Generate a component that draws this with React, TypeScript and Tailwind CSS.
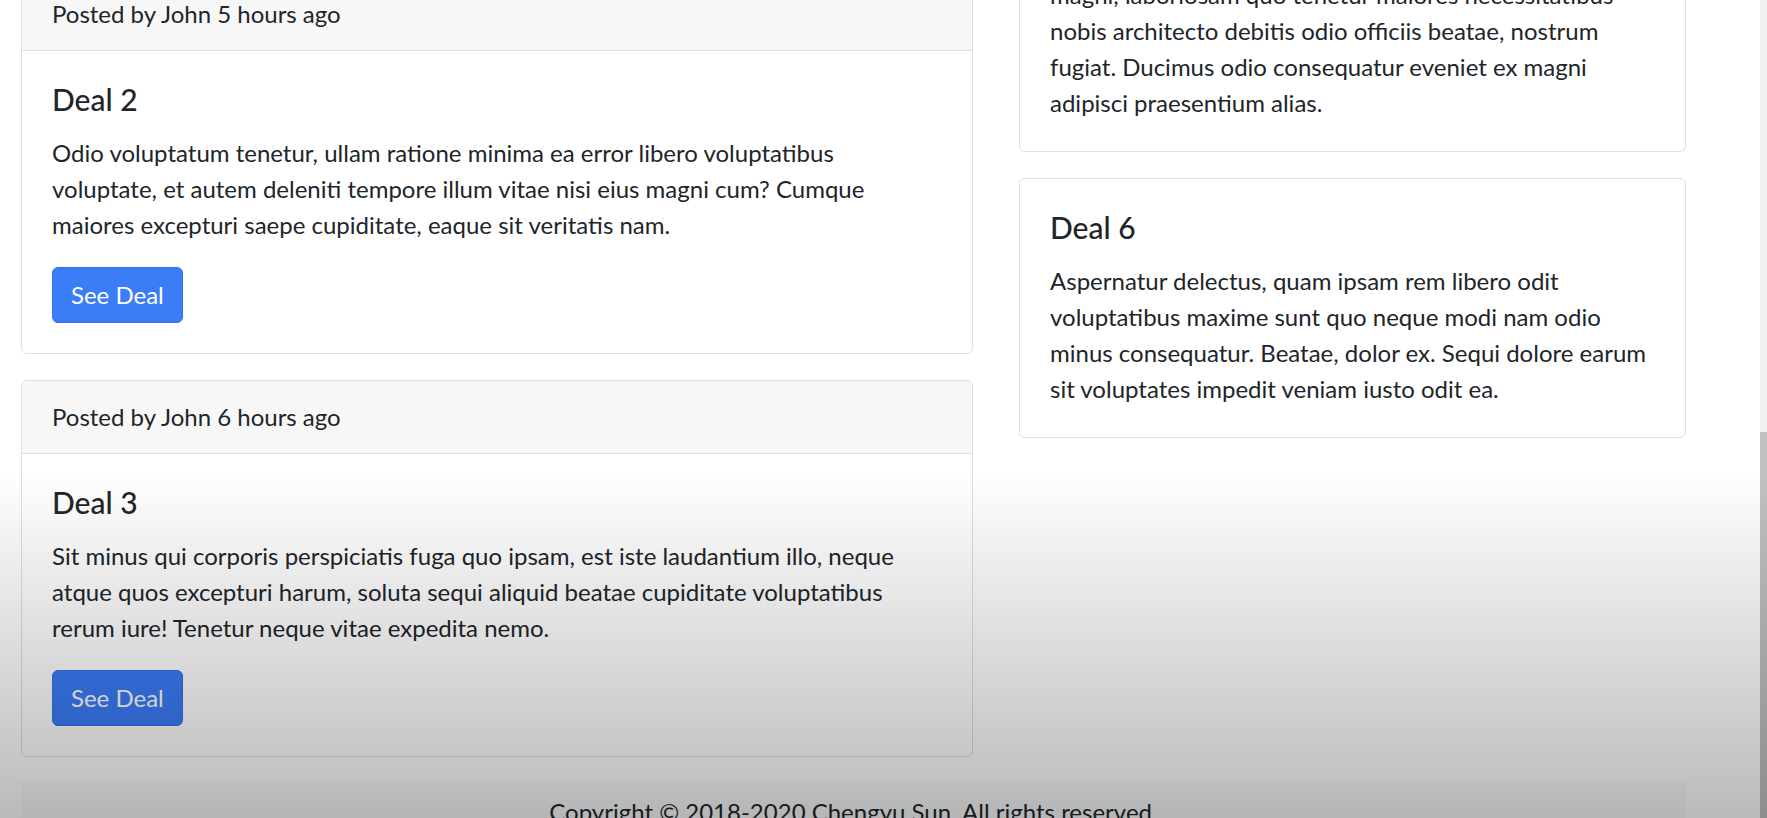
import React from 'react';

interface Deal {
  title: string;
  lines: string[];
  postedBy?: string;
  showButton?: boolean;
}

const leftDeals: Deal[] = [
  {
    title: 'Deal 1',
    postedBy: 'Posted by John 4 hours ago',
    showButton: true,
    lines: [
      'Lorem ipsum dolor sit amet consectetur adipisicing elit. Quas, natus',
      'dolorum officia veniam nihil rerum quae repellendus, ratione possimus',
      'voluptate asperiores ipsa eligendi.',
    ],
  },
  {
    title: 'Deal 2',
    postedBy: 'Posted by John 5 hours ago',
    showButton: true,
    lines: [
      'Odio voluptatum tenetur, ullam ratione minima ea error libero voluptatibus',
      'voluptate, et autem deleniti tempore illum vitae nisi eius magni cum? Cumque',
      'maiores excepturi saepe cupiditate, eaque sit veritatis nam.',
    ],
  },
  {
    title: 'Deal 3',
    postedBy: 'Posted by John 6 hours ago',
    showButton: true,
    lines: [
      'Sit minus qui corporis perspiciatis fuga quo ipsam, est iste laudantium illo, neque',
      'atque quos excepturi harum, soluta sequi aliquid beatae cupiditate voluptatibus',
      'rerum iure! Tenetur neque vitae expedita nemo.',
    ],
  },
];

const rightDeals: Deal[] = [
  {
    title: 'Deal 4',
    lines: [
      'Quibusdam, eveniet porro dolorum facere nihil',
      'repellat voluptas laudantium at ut, cumque',
      'quidem deserunt illum.',
    ],
  },
  {
    title: 'Deal 5',
    lines: [
      'Nemo rerum ab similique, officia quod veniam',
      'tempora sapiente explicabo dolores harum',
      'magni, laboriosam quo tenetur maiores necessitatibus',
      'nobis architecto debitis odio officiis beatae, nostrum',
      'fugiat. Ducimus odio consequatur eveniet ex magni',
      'adipisci praesentium alias.',
    ].slice(0),
  },
  {
    title: 'Deal 6',
    lines: [
      'Aspernatur delectus, quam ipsam rem libero odit',
      'voluptatibus maxime sunt quo neque modi nam odio',
      'minus consequatur. Beatae, dolor ex. Sequi dolore earum',
      'sit voluptates impedit veniam iusto odit ea.',
    ],
  },
];

const DealCard: React.FC<{ deal: Deal }> = ({ deal }) => {
  return (
    <div className="mb-[26px] rounded-[6px] border border-[#dfdfdf] bg-white">
      {deal.postedBy && (
        <div className="rounded-t-[5px] border-b border-[#dfdfdf] bg-[#f7f7f7] px-[30px] py-[18px] text-[24px] leading-[36px]">
          {deal.postedBy}
        </div>
      )}
      <div className="p-[30px]">
        <h5 className="mb-[18px] text-[30px] leading-[36px] font-medium">{deal.title}</h5>
        <p className="text-[24px] leading-[36px]">
          {deal.lines.map((line) => (
            <span key={line} className="block whitespace-nowrap">
              {line}
            </span>
          ))}
        </p>
        {deal.showButton && (
          <button className="mt-[24px] h-[56px] rounded-[6px] border border-[#3470e4] bg-[#3b7cf7] px-[18px] text-[24px] leading-[36px] text-white">
            See Deal
          </button>
        )}
      </div>
    </div>
  );
};

export default function App() {
  return (
    <div className="relative flex h-screen overflow-hidden bg-white font-['Lato','Liberation_Sans',sans-serif] text-[#212529]">
      <div className="flex-1 overflow-hidden">
        {/* page is scrolled down */}
        <div className="-mt-[426px] w-[1686px] pl-[21px]">
          <div className="flex items-start gap-[46px]">
            <div className="w-[952px]">
              {leftDeals.map((d) => (
                <DealCard key={d.title} deal={d} />
              ))}
            </div>
            <div className="-mt-1 w-[667px]">
              {rightDeals.map((d) => (
                <DealCard key={d.title} deal={d} />
              ))}
            </div>
          </div>
          <footer className="bg-[#f8f9fa] pt-[11px] pb-[24px] text-center text-[24px] leading-[36px]">
            Copyright © 2018-2020 Chengyu Sun. All rights reserved.
          </footer>
        </div>
      </div>

      {/* scrollbar */}
      <div className="w-[7px] shrink-0 bg-[#f1f1f1]">
        <div className="mt-[432px] h-[400px] bg-[#c1c1c1]" />
      </div>

      {/* video player shading */}
      <div className="pointer-events-none absolute inset-x-0 top-[470px] bottom-0 bg-[linear-gradient(to_bottom,rgba(0,0,0,0),rgba(0,0,0,0.27))]" />
    </div>
  );
}
